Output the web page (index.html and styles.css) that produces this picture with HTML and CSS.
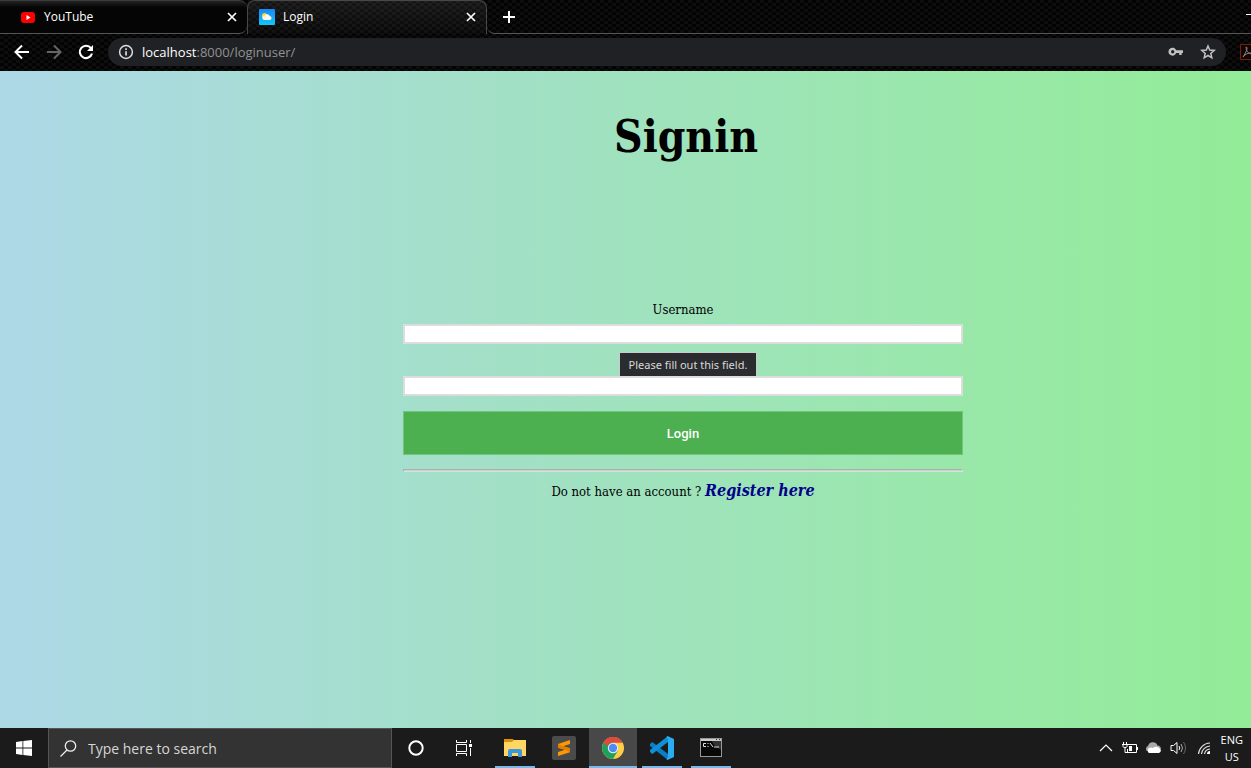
FILE: index.html
```html
<!DOCTYPE html>
<html lang="en">
<head>
<meta charset="utf-8">
<title>Login</title>
<link rel="stylesheet" href="styles.css">
</head>
<body>
<header class="browser">
  <div class="tabs">
    <div class="tab tab-first">
      <svg class="favicon" viewBox="0 0 16 16"><rect x="1" y="3" width="14" height="11" rx="3" fill="#f00"/><path d="M6.500 6v5l4-2.500z" fill="#fff"/></svg>
      <span class="tab-title">YouTube</span>
      <button class="tab-close" aria-label="Close YouTube"><svg width="10" height="10" viewBox="0 0 10 10"><path d="M1 1l8 8M9 1l-8 8" stroke="#fff" stroke-width="1.700"/></svg></button>
    </div>
    <div class="tab tab-active">
      <svg class="favicon" viewBox="0 0 16 16"><defs><linearGradient id="sky" x2="0" y2="1"><stop stop-color="#1687f8"/><stop offset="1" stop-color="#10c8fb"/></linearGradient></defs><rect width="16" height="16" rx="1" fill="url(#sky)"/><circle cx="5.500" cy="6.500" r="2.500" fill="#ffd42e"/><path d="M5.500 11a2.200 2.200 0 0 1 0-4.400 3 3 0 0 1 5.300.3A2.100 2.100 0 0 1 11 11z" fill="#fff6e4"/></svg>
      <span class="tab-title">Login</span>
      <button class="tab-close" aria-label="Close Login"><svg width="10" height="10" viewBox="0 0 10 10"><path d="M1 1l8 8M9 1l-8 8" stroke="#fff" stroke-width="1.700"/></svg></button>
    </div>
    <div class="tab-rest">
      <button class="new-tab" aria-label="New tab"><svg width="12" height="12" viewBox="0 0 12 12"><path d="M6 0v12M0 6h12" stroke="#fff" stroke-width="2"/></svg></button>
      <button class="minimize" aria-label="Minimize"><svg width="5" height="29" viewBox="0 0 5 29"><path d="M0 14.500h5" stroke="#fff"/></svg></button>
    </div>
  </div>
  <div class="toolbar">
    <button class="nav" aria-label="Back"><svg width="16" height="16" viewBox="0 0 16 16" fill="none" stroke="#fff" stroke-width="2"><path d="M15 8H2M8 1.500L1.500 8 8 14.500"/></svg></button>
    <button class="nav" aria-label="Forward"><svg width="16" height="16" viewBox="0 0 16 16" fill="none" stroke="#656565" stroke-width="2"><path d="M1 8h13M8 1.500L14.500 8 8 14.500"/></svg></button>
    <button class="nav" aria-label="Reload"><svg width="16" height="16" viewBox="0 0 16 16"><path d="M13 4.200A6.200 6.200 0 1 0 14 9.500" fill="none" stroke="#fff" stroke-width="2.100"/><path d="M15 1v6H9z" fill="#fff"/></svg></button>
    <div class="address">
      <svg width="16" height="16" viewBox="0 0 16 16"><circle cx="8" cy="8" r="6.400" fill="none" stroke="#ddd" stroke-width="1.500"/><path d="M7.200 4.300h1.700V6H7.200zM7.200 7.200h1.700v4.400H7.200z" fill="#ddd"/></svg>
      <span class="url"><span class="host">localhost</span>:8000/loginuser/</span>
      <svg width="16" height="16" viewBox="0 0 16 16"><path fill-rule="evenodd" d="M8.200 6.300H15V9h-1.300v2h-2.500V9h-3a4 4 0 1 1 0-2.700zM4.700 6A1.700 1.700 0 1 0 4.700 9.400 1.700 1.700 0 0 0 4.700 6z" fill="#c2c2c2"/></svg>
      <svg width="16" height="16" viewBox="0 0 16 16"><path d="M8 2l1.700 4 4.500.4-3.400 3 1 4.400L8 11.500l-3.800 2.300 1-4.400-3.400-3 4.500-.4z" fill="none" stroke="#c2c2c2" stroke-width="1.500"/></svg>
    </div>
    <svg class="extension" width="11" height="16" viewBox="0 0 11 16"><path d="M11 .5H.5v15H11" fill="#0c0706" stroke="#831808"/><path d="M6 3c2 0 1 4-3 10M6 3c0 4 2 6 5 7M3 13c2-3 5-4 8-4" fill="none" stroke="#8d8580"/></svg>
  </div>
</header>

<main class="page">
  <h1>Signin</h1>
  <form class="login">
    <label for="username">Username</label>
    <div class="field">
      <input type="text" id="username" required>
      <div class="tooltip" role="tooltip">Please fill out this field.</div>
    </div>
    <input class="password" type="password" aria-label="Password" required>
    <button class="submit" type="submit">Login</button>
    <hr>
    <p>Do not have an account ? <a href="#register">Register here</a></p>
  </form>
</main>

<footer class="taskbar">
  <button class="task" aria-label="Start"><svg width="16" height="16" viewBox="0 0 16 16"><path d="M0 2l6.500-.9v6.500H0zM7.300 1L16 0v7.600H7.300zM0 8.400h6.500V15L0 14.100zM7.300 8.400H16V16l-8.700-1z" fill="#fff"/></svg></button>
  <label class="search">
    <svg width="17" height="17" viewBox="0 0 17 17" fill="none" stroke="#eee" stroke-width="1.300"><circle cx="10.500" cy="6" r="5.200"/><path d="M7 10L.5 16.500"/></svg>
    <input type="text" placeholder="Type here to search" aria-label="Type here to search">
  </label>
  <button class="task" aria-label="Cortana"><svg width="16" height="16" viewBox="0 0 16 16"><circle cx="8" cy="8" r="6.700" fill="none" stroke="#fff" stroke-width="2"/></svg></button>
  <button class="task" aria-label="Task view"><svg width="16" height="16" viewBox="0 0 16 16" fill="none" stroke="#fff"><path d="M.5 0v2.500h10V0M.5 16v-2.500h10V16M.5 4.500h10v7H.5zM14.500 0v3M14.500 8v8"/><path d="M13 4h3v3h-3z" fill="#fff" stroke="none"/></svg></button>
  <div class="apps">
    <button class="task running" aria-label="File Explorer"><svg width="22" height="18" viewBox="0 0 22 18"><path d="M0 0h9l1.500 2H22v15H0z" fill="#dc9500"/><path d="M0 3h8l2-2h12v16H0z" fill="#ffd564"/><path d="M4 18v-6q0-2 2-2h10q2 0 2 2v6h-4v-4H8v4z" fill="#389add"/></svg></button>
    <button class="task" aria-label="Sublime Text"><svg width="24" height="24" viewBox="0 0 24 24"><rect width="24" height="24" rx="2" fill="#4b4b4b"/><path d="M6 8l12-4v4l-7 2.200 7 2v4L6 20v-4l7-2.200-7-2z" fill="#ff9800"/><path d="M6 8v3.800l7 2 5 2.400v-4l-7-2z" fill="#e87e00"/></svg></button>
    <button class="task running current" aria-label="Google Chrome"><svg width="22" height="22" viewBox="0 0 22 22"><circle cx="11" cy="11" r="11" fill="#ffcd46"/><path d="M11 11L1.500 5.500A11 11 0 0 1 20.500 5.500H11z" fill="#dd4b3e"/><path d="M1.500 5.500A11 11 0 0 0 11 22l4.800-8.200L11 11z" fill="#1fa15d"/><path d="M1.500 5.500L6.200 13.700 11 11 11 5.500z" fill="#1fa15d"/><path d="M1.500 5.500A11 11 0 0 1 20.500 5.500H11A5.500 5.500 0 0 0 5.700 9.500z" fill="#dd4b3e"/><circle cx="11" cy="11" r="5.200" fill="#f1f1f1"/><circle cx="11" cy="11" r="4.200" fill="#4f8bf4"/></svg></button>
    <button class="task running" aria-label="Visual Studio Code"><svg width="24" height="24" viewBox="0 0 24 24"><path d="M0 8l2.300-2 15.700 12v6L0 10z" fill="#087fc8"/><path d="M0 16l2.300 2L18 6V0L0 14z" fill="#118fd5"/><path d="M17.500 0L24 3v18l-6.500 3-1-1L18 21V3l-1.500-2z" fill="#2bacf1"/></svg></button>
    <button class="task running" aria-label="Command Prompt"><svg width="22" height="20" viewBox="0 0 22 20"><path d="M0 0h22v19H0z" fill="#999"/><path d="M1 3h20v15H1z" fill="#080808"/><path d="M1 1h20v2H1z" fill="#ccc"/><path d="M12 3h9v9C18 9 14 9 12 3z" fill="#333"/><path d="M6 5.500H3.500v3H6M8 5v1M8 8v1M10 5l3 4M14 9h5" fill="none" stroke="#ddd"/><path d="M16 1h1v1h-1zM19 1h1v1h-1z" fill="#333"/></svg></button>
  </div>
  <div class="tray">
    <svg width="16" height="16" viewBox="0 0 16 16"><path d="M2 11l6-6 6 6" fill="none" stroke="#fff" stroke-width="1.200"/></svg>
    <svg width="16" height="16" viewBox="0 0 16 16" fill="none" stroke="#fff"><path d="M5 4.500h9.500v8h-9V9M15.500 7v3M1.500 2v2M4.500 2v2M0 4.500h6M1 4.500v2q0 1 2 1t2-1v-2M3 7v5.500h3"/><path d="M7 6h3v5H7z" fill="#fff" stroke="none"/></svg>
    <svg width="16" height="16" viewBox="0 0 16 16"><path d="M1 11a3 3 0 0 1 1-5 5 5 0 0 1 9.500-.5A4 4 0 0 1 15 9z" fill="#aaa"/><path d="M3 13a3 3 0 0 1 0-5c2-1 3-.5 4 0 3-2 5-1 6 0a2.600 2.600 0 0 1 0 5z" fill="#fff"/></svg>
    <svg width="17" height="16" viewBox="0 0 17 16" fill="none" stroke="#fff"><path d="M1 5.500h2.500L7 2.500v11L3.500 10.500H1zM9 6q1.500 2 0 4"/><path d="M11 4q3 4 0 8" stroke="#aaa"/><path d="M13.500 2q4 6 0 12" stroke="#666"/></svg>
    <svg class="wifi" width="16" height="16" viewBox="0 0 16 16" fill="none" stroke="#ddd"><path d="M1.500 14A12 12 0 0 1 13 3M4.500 14A9 9 0 0 1 13 6M7.500 14A6 6 0 0 1 13 9" stroke-width="1.200"/><path d="M10 14a3 3 0 0 1 3-3v3z" fill="#fff" stroke="none"/></svg>
    <div class="language">ENG<br>US</div>
  </div>
</footer>
</body>
</html>
```
FILE: styles.css
```css
* { box-sizing: border-box; }

body {
  margin: 0;
  min-height: 100vh;
  display: flex;
  flex-direction: column;
  overflow-x: hidden;
  font-family: "Open Sans", "Noto Sans", sans-serif;
}

svg { flex: none; display: block; }

button {
  display: flex;
  align-items: center;
  justify-content: center;
  padding: 0;
  border: 0;
  background: none;
  font: inherit;
}

.browser {
  color: #fff;
  background: repeating-conic-gradient(#030303 0 25%, #0d0d0d 0 50%) 0 0 / 8px 6px;
}

.tabs { display: flex; height: 34px; }

.tab {
  display: flex;
  align-items: center;
  gap: 8px;
  padding: 0 10px 2px 12px;
  border-top: 1px solid #3c3c3c;
  font-size: 12px;
}

.tab-first {
  width: 247px;
  padding-left: 20px;
  padding-bottom: 1px;
  border-bottom: 1px solid #555;
  border-radius: 0 8px 8px 0;
  background: linear-gradient(#222, #050505 20%, #050505);
}

.tab-active {
  width: 240px;
  padding-left: 11px;
  border: 1px solid #484848;
  border-bottom: 0;
  border-radius: 8px 8px 0 0;
  background: linear-gradient(#ffffff14, #ffffff05);
}

.favicon { width: 16px; height: 16px; }
.tab-title { flex: 1; }

.tab-rest {
  flex: 1;
  display: flex;
  justify-content: space-between;
  padding-left: 16px;
  border-bottom: 1px solid #555;
  border-bottom-left-radius: 8px;
}

.minimize { align-self: flex-start; }

.toolbar {
  display: flex;
  align-items: center;
  height: 37px;
  padding-left: 14px;
  padding-bottom: 1px;
  gap: 16px;
}

.address {
  flex: 1;
  display: flex;
  align-items: center;
  gap: 16px;
  height: 28px;
  margin-left: -2px;
  padding: 0 10px;
  border-radius: 14px;
  background: #202124;
}

.url { flex: 1; margin-left: -8px; font-size: 13px; color: #929292; }
.host { color: #fff; }
.extension { margin-left: -2px; }

.page {
  flex: 1;
  padding: 38px 0 0 115px;
  background: linear-gradient(to right, lightblue, lightgreen 1366px);
  font-family: "DejaVu Serif Condensed", "DejaVu Serif", serif;
  text-align: center;
}

h1 {
  margin: 0 0 135px;
  padding-left: 6px;
  font-size: 44px;
  line-height: 56px;
}

.login {
  display: flex;
  flex-direction: column;
  width: 560px;
  margin: 0 auto;
  font-size: 13px;
  line-height: 20px;
}

.field { position: relative; margin: 4px 0 32px; }

.login input {
  display: block;
  width: 100%;
  height: 20px;
  border: 2px solid #ddd;
  background: #fff;
}

.login .password { position: relative; }

.tooltip {
  position: absolute;
  top: 28px;
  left: 216px;
  width: 138px;
  height: 26px;
  border: 1px solid #cbcbcb;
  background: #2b2c2f;
  color: #d8d8d8;
  font: 11px/24px "Noto Sans", sans-serif;
  white-space: nowrap;
}

.submit {
  height: 44px;
  margin: 15px 0 14px;
  border: 1px solid #72c677;
  background: #4caf50;
  color: #fff;
  font: 500 13px Roboto, sans-serif;
}

hr {
  width: 100%;
  height: 3px;
  margin: 0;
  border: 1px solid #a5b5ac;
  border-right-color: #ddd;
  border-bottom-color: #ddd;
  background: #c4d4ca;
}

.login p { margin: 9px 0 0; }
.login a { color: #00008b; font-size: 16px; font-weight: bold; font-style: italic; text-decoration: none; }

.taskbar { display: flex; height: 40px; background: #1b1b1b; color: #fff; }
.task { width: 48px; height: 40px; border: solid transparent; border-width: 0 4px; }

.search {
  display: flex;
  align-items: center;
  gap: 11px;
  width: 344px;
  padding: 0 11px;
  border: 1px solid #555;
  background: #333;
}

.search input { flex: 1; border: 0; padding: 0; background: none; font: 14px "Open Sans", sans-serif; }
.search input::placeholder { color: #d6d6d6; opacity: 1; }

.apps { display: flex; gap: 1px; padding-left: 3px; }
.running { background: linear-gradient(#76b9ed, #76b9ed) bottom / 100% 2px no-repeat padding-box; }
.current { border-width: 0; background-color: #484848; }

.tray { display: flex; align-items: center; gap: 8px; margin-left: auto; padding-right: 8px; }
.wifi { margin-left: 2px; }
.language { font-size: 11px; line-height: 17px; text-align: center; }
```
